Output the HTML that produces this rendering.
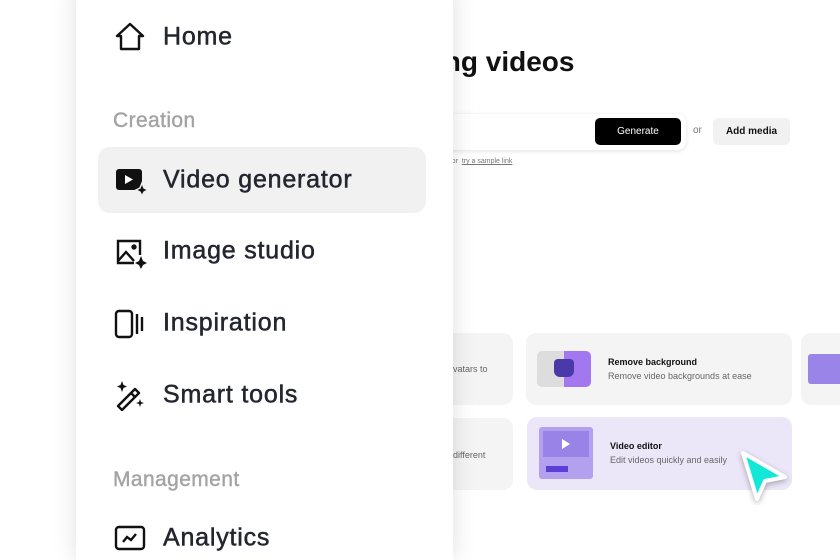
<!DOCTYPE html>
<html><head><style>
html,body{margin:0;width:840px;height:560px;overflow:hidden}
body{background:#fff;font-family:"Liberation Sans",sans-serif;position:relative}
.a{position:absolute}
.side{left:76px;top:-30px;width:377px;height:590px;background:#fff;border-radius:26px 26px 0 0;box-shadow:0 0 24px rgba(0,0,0,.13)}
.it{position:absolute;left:163px;font-size:25px;letter-spacing:0.8px;-webkit-text-stroke:0.5px #23262f;color:#23262f;transform:translateY(-50%);white-space:nowrap}
.lb{position:absolute;left:113px;font-size:21px;letter-spacing:0.4px;-webkit-text-stroke:0.4px #a3a3a3;color:#a3a3a3;transform:translateY(-50%)}
.ic{position:absolute;left:114px}
.card{position:absolute;background:#f4f4f4;border-radius:10px}
.t{font-size:9px;font-weight:bold;color:#111}
.s{font-size:9px;color:#666;margin-top:4px}
</style></head><body>
<div class="a" style="left:436px;top:46px;font-size:28px;font-weight:bold;color:#111">ing videos</div>
<div class="a" style="left:420px;top:114px;width:266px;height:36px;background:#fff;border-radius:8px;box-shadow:0 1px 5px rgba(0,0,0,.12)"></div>
<div class="a" style="left:595px;top:118px;width:86px;height:27px;background:#000;border-radius:5px;color:#fff;font-size:10px;line-height:27px;text-align:center">Generate</div>
<div class="a" style="left:693px;top:125px;font-size:10px;color:#777">or</div>
<div class="a" style="left:713px;top:118px;width:77px;height:27px;background:#f1f1f1;border-radius:5px;color:#111;font-size:10px;font-weight:bold;line-height:27px;text-align:center">Add media</div>
<div class="a" style="left:440px;top:158px;font-size:7px;color:#777"><u>on</u> &nbsp;or&nbsp; <u>try a sample link</u></div>
<div class="card" style="left:400px;top:333px;width:113px;height:72px"><div class="s" style="position:absolute;left:53px;top:27px">vatars to</div></div>
<div class="card" style="left:526px;top:333px;width:266px;height:72px">
 <div class="a" style="left:11px;top:18px;width:54px;height:36px;border-radius:5px;background:linear-gradient(90deg,#ddd 50%,#a277f0 50%)"></div>
 <div class="a" style="left:28px;top:26px;width:20px;height:18px;background:#4a3aa8;border-radius:4px 4px 6px 6px"></div>
 <div class="a" style="left:82px;top:24px"><div class="t">Remove background</div><div class="s">Remove video backgrounds at ease</div></div></div>
<div class="card" style="left:801px;top:333px;width:60px;height:72px"><div class="a" style="left:7px;top:21px;width:40px;height:30px;background:#9b84e8;border-radius:3px"></div></div>
<div class="card" style="left:400px;top:418px;width:113px;height:72px"><div class="s" style="position:absolute;left:53px;top:28px">different</div></div>
<div class="card" style="left:527px;top:417px;width:265px;height:73px;background:#ece7f8">
 <div class="a" style="left:12px;top:10px;width:54px;height:52px;background:#b3a1f0;border-radius:3px"></div>
 <div class="a" style="left:16px;top:14px;width:46px;height:26px;background:#9a83e6"></div>
 <div class="a" style="left:35px;top:22px;width:0;height:0;border-left:8px solid #fff;border-top:5px solid transparent;border-bottom:5px solid transparent"></div>
 <div class="a" style="left:19px;top:49px;width:22px;height:6px;background:#5a3fd6"></div>
 <div class="a" style="left:83px;top:24px"><div class="t">Video editor</div><div class="s">Edit videos quickly and easily</div></div></div>
<svg class="a" style="left:735px;top:445px" width="60" height="60"><path d="M8 8 L50 32 L30 36 L22 54 Z" fill="#11e8d8" stroke="#fff" stroke-width="4" stroke-linejoin="round" filter="drop-shadow(0 2px 3px rgba(0,0,0,.3))"/></svg>
<div class="a side"></div>
<svg class="ic" style="top:21px" width="32" height="32" viewBox="0 0 32 32" fill="none" stroke="#111" stroke-width="2.4" stroke-linejoin="round"><path d="M3 15 L16 3 L29 15 H25 V28 H7 V15 Z"/></svg>
<div class="it" style="top:37px">Home</div>
<div class="lb" style="top:121px">Creation</div>
<div class="a" style="left:98px;top:147px;width:328px;height:66px;background:#f1f1f1;border-radius:12px"></div>
<svg class="ic" style="top:166px" width="34" height="30" viewBox="0 0 34 30"><rect x="2" y="3" width="26" height="21" rx="3" fill="#111"/><path d="M11 9 L19 13.5 L11 18Z" fill="#fff"/><path d="M28 17 L30 22 L34 24 L30 26 L28 30 L26 26 L22 24 L26 22Z" fill="#111" stroke="#f1f1f1" stroke-width="1.5"/></svg>
<div class="it" style="top:180px">Video generator</div>
<svg class="ic" style="top:237px" width="34" height="32" viewBox="0 0 34 32" fill="none" stroke="#111" stroke-width="2.4"><path d="M20 26 H4 V4 H26 V18"/><path d="M4 24 L12 15 L20 24"/><circle cx="20" cy="10" r="1.5" fill="#111"/><path d="M27 19 L29 24 L33 26 L29 28 L27 32 L25 28 L21 26 L25 24Z" fill="#111" stroke="none"/></svg>
<div class="it" style="top:251px">Image studio</div>
<svg class="ic" style="top:309px" width="34" height="30" viewBox="0 0 34 30" fill="none" stroke="#111" stroke-width="2.4"><rect x="2" y="2" width="16" height="26" rx="3"/><path d="M23 5 V25 M28 8 V22"/></svg>
<div class="it" style="top:323px">Inspiration</div>
<svg class="ic" style="top:379px" width="34" height="32" viewBox="0 0 34 32" fill="none" stroke="#111" stroke-width="2.4" stroke-linejoin="round"><path d="M4 27 L21 10 L25 14 L8 31 Z M17 14 L21 18"/><path d="M8 2 L9.5 6 L13 7.5 L9.5 9 L8 13 L6.5 9 L3 7.5 L6.5 6Z M26 20 L27 23 L30 24 L27 25 L26 28 L25 25 L22 24 L25 23Z" fill="#111" stroke="none"/></svg>
<div class="it" style="top:395px">Smart tools</div>
<div class="lb" style="top:480px">Management</div>
<svg class="ic" style="top:524px" width="34" height="30" viewBox="0 0 34 30" fill="none" stroke="#111" stroke-width="2.4"><rect x="2" y="3" width="28" height="22" rx="3"/><path d="M9 18 L13 13 L17 16 L22 10"/></svg>
<div class="it" style="top:538px">Analytics</div>
</body></html>
